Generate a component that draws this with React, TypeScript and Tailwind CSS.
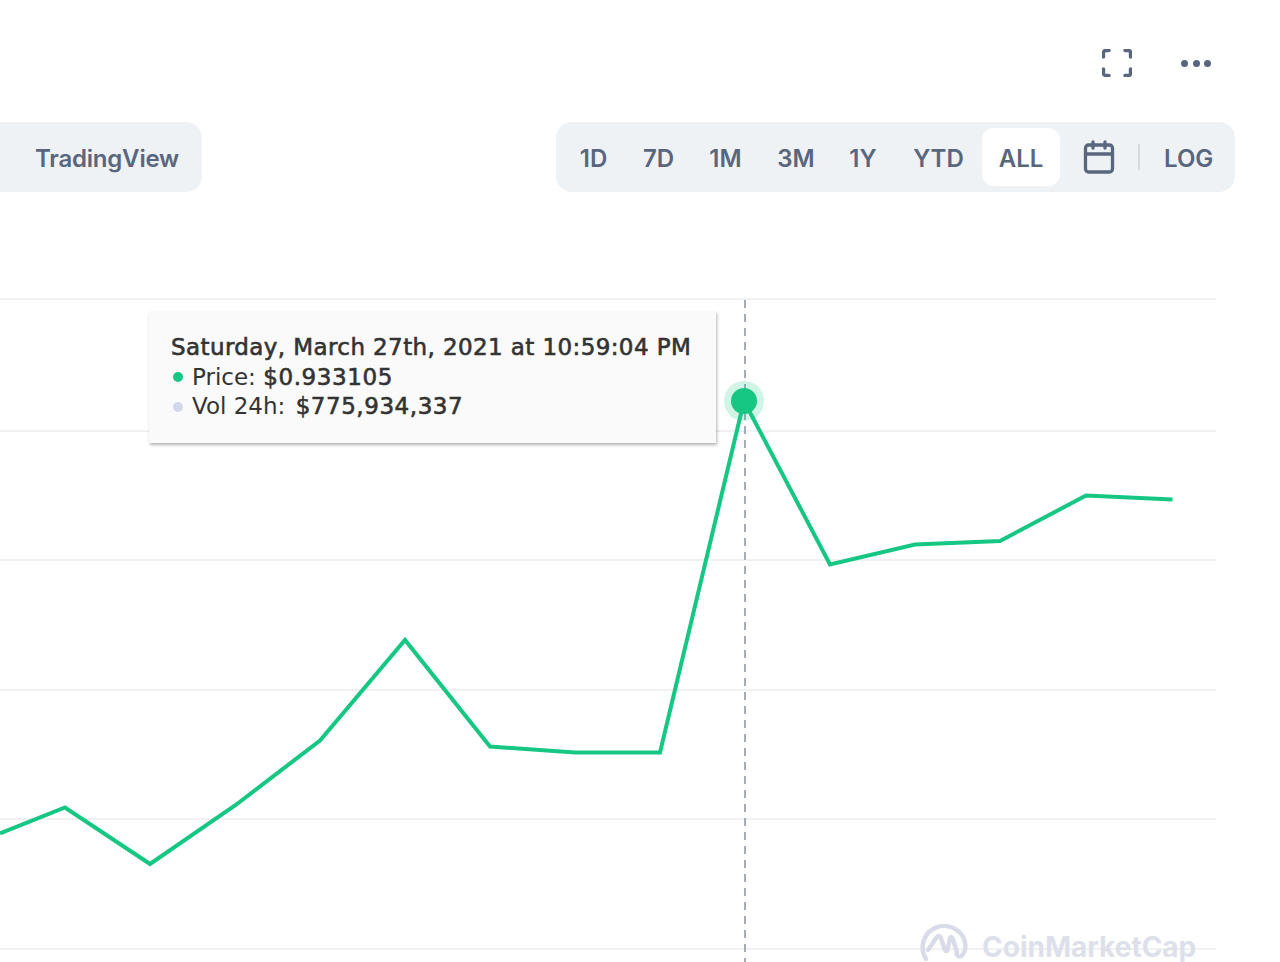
import { Calendar } from "lucide-react"

const ranges = [
  { label: "1D", w: "w-[75px]" },
  { label: "7D", w: "w-[55px]" },
  { label: "1M", w: "w-[79px]" },
  { label: "3M", w: "w-[62px]" },
  { label: "1Y", w: "w-[72px]" },
  { label: "YTD", w: "w-[79px]" },
]

const gridLines = [299, 431, 560, 690, 819, 949]

const linePoints =
  "0,833.5 65,807.5 150,864 235,805.5 320,740.5 405,640 490,746.5 575,752.5 660,752.5 744,401 830,564.5 915,544.5 1000,541 1086,495.5 1172.5,499.5"

export default function App() {
  return (
    <div className="w-[1280px] h-[962px] overflow-hidden bg-white font-['Inter',sans-serif] text-[#58667e]">
      <div className="h-[122px] flex items-start justify-end pt-[49px] pr-[69px] gap-[49px]">
        <svg width="30" height="28" viewBox="0 0 30 28" fill="none" stroke="#58667e" strokeWidth="3.4" strokeLinecap="round" strokeLinejoin="round">
          <path d="M1.5 8V3.5a2 2 0 0 1 2-2H7" />
          <path d="M23 1.500h3.500a2 2 0 0 1 2 2V8" />
          <path d="M28.500 20v4.500a2 2 0 0 1-2 2H23" />
          <path d="M7 26.500H3.500a2 2 0 0 1-2-2V20" />
        </svg>
        <div className="flex items-center gap-[4.5px] h-[28px]">
          <span className="w-[7px] h-[7px] rounded-full bg-[#58667e]" />
          <span className="w-[7px] h-[7px] rounded-full bg-[#58667e]" />
          <span className="w-[7px] h-[7px] rounded-full bg-[#58667e]" />
        </div>
      </div>

      <div className="flex justify-between items-start pr-[45px]">
        <div className="w-[202px] h-[70px] rounded-r-[16px] bg-[#eff2f5] flex items-center pl-[35px] pt-[4px] text-[24px] font-semibold tracking-[-0.2px]">
          TradingView
        </div>
        <div className="w-[679px] h-[70px] rounded-[16px] bg-[#eff2f5] flex items-center text-[24px] font-semibold">
          {ranges.map((r) => (
            <span key={r.label} className={`${r.w} pt-[4px] text-center`}>
              {r.label}
            </span>
          ))}
          <span className="ml-[4px] w-[78px] h-[58px] pt-[4px] rounded-[12px] bg-white flex items-center justify-center">ALL</span>
          <Calendar className="ml-[21px] w-[36px] h-[36px]" strokeWidth={2.2} />
          <span className="ml-[21px] w-[2px] h-[26px] bg-[#d5dae2]" />
          <span className="ml-[24px] pt-[4px]">LOG</span>
        </div>
      </div>

      <div className="relative h-[770px]">
        <svg className="block" width="1280" height="770" viewBox="0 192 1280 770" fill="none">
          {gridLines.map((y) => (
            <line key={y} x1="0" x2="1216" y1={y} y2={y} stroke="#f0f1f3" strokeWidth="2" />
          ))}
          <line x1="745" x2="745" y1="300" y2="962" stroke="#a6abba" strokeWidth="2" strokeDasharray="8 6" />
          <circle cx="744" cy="401" r="20" fill="#16c784" fillOpacity="0.2" />
          <polyline points={linePoints} stroke="#16c784" strokeWidth="4" strokeLinejoin="miter" />
          <circle cx="744" cy="401" r="13" fill="#16c784" />
        </svg>

        <div className="absolute left-[149px] top-[119px] w-[567px] h-[132px] bg-[#fafafa] shadow-[1px_2px_3px_rgba(0,0,0,0.3)] pl-[22px] pt-[22px] font-['DejaVu_Sans',sans-serif] text-[23px] leading-[29.5px] text-[#333333] whitespace-nowrap">
          <div className="tracking-[0.4px] [-webkit-text-stroke:0.6px_#333333]">Saturday, March 27th, 2021 at 10:59:04 PM</div>
          <div className="flex items-center">
            <span className="w-[10px] h-[10px] rounded-full bg-[#16c784] ml-[2px] mr-[9px]" />
            <span>
              Price: <span className="tracking-[0.6px] [-webkit-text-stroke:0.6px_#333333]">$0.933105</span>
            </span>
          </div>
          <div className="flex items-center">
            <span className="w-[10px] h-[10px] rounded-full bg-[#d3d7e8] ml-[2px] mr-[9px]" />
            <span>
              Vol 24h: <span className="ml-[3px] tracking-[0.55px] [-webkit-text-stroke:0.6px_#333333]">$775,934,337</span>
            </span>
          </div>
        </div>

        <div className="absolute left-[920px] top-[731px] flex items-start gap-[14px] text-[#dde0ea]">
          <svg className="-mt-[2px]" width="48" height="50" viewBox="0 0 48 50" fill="none" stroke="#d9dce8" strokeWidth="4.4" strokeLinecap="round" strokeLinejoin="round">
            <path d="M6 38A21.500 21.500 0 1 1 45.500 24c0 5-2 9-4 11-2 1-4 0-5-2" />
            <path d="M8 29l9-13c1-1.500 3-1.500 3.500 0L25 29c.5 1.500 2 1.500 2.500 0L30 17c.5-1.500 2-1.500 2.500 0L37 31" />
          </svg>
          <span className="mt-[10px] text-[28px] leading-[28px] font-bold">CoinMarketCap</span>
        </div>
      </div>
    </div>
  )
}
